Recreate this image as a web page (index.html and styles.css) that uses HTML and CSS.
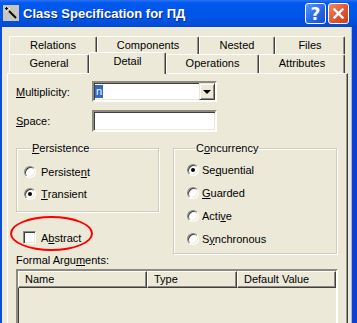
FILE: index.html
```html
<!DOCTYPE html>
<html>
    <head>
        <title>Class Specification for ПД</title>
        <link rel="stylesheet" href="styles.css">
    </head>
    <body>
        <div class="window">
            <div class="titlebar">
                <span class="app-icon">
                    <svg width="16" height="16" viewBox="0 0 16 16">
                        <rect width="16" height="16" fill="#c9c6bb"/>
                        <line x1="6" y1="6" x2="13" y2="13" stroke="#000" stroke-width="2"/>
                        <rect x="3" y="2" width="1" height="3" fill="#000"/>
                        <rect x="2" y="3" width="3" height="1" fill="#000"/>
                        <rect x="6" y="3" width="1" height="1" fill="#fff"/>
                        <rect x="3" y="6" width="1" height="1" fill="#fff"/>
                    </svg>
                </span>
                <span class="title">Class Specification for ПД</span>
                <span class="cap-btn help">?</span>
                <span class="cap-btn close">
                    <svg width="11" height="11" viewBox="0 0 11 11">
                        <path d="M1.5 1.5 L9.5 9.5 M9.5 1.5 L1.5 9.5" stroke="#fff" stroke-width="2.4" stroke-linecap="square"/>
                    </svg>
                </span>
            </div>
            <div class="client">
                <div class="tabs">
                    <div class="tab-row">
                        <div class="tab" style="width:88px">Relations</div>
                        <div class="tab" style="width:102px">Components</div>
                        <div class="tab" style="width:76px">Nested</div>
                        <div class="tab" style="width:70px">Files</div>
                    </div>
                    <div class="tab-row front">
                        <div class="tab" style="width:80px">General</div>
                        <div class="tab active" style="width:77px">Detail</div>
                        <div class="tab" style="width:93px">Operations</div>
                        <div class="tab" style="width:86px">Attributes</div>
                    </div>
                </div>
                <div class="panel">
                    <div class="field-row">
                        <span class="field-label"><u>M</u>ultiplicity:</span>
                        <div class="combo">
                            <span class="combo-text"><span class="sel">n</span></span>
                            <span class="combo-btn"><span class="arrow"></span></span>
                        </div>
                    </div>
                    <div class="field-row space-row">
                        <span class="field-label"><u>S</u>pace:</span>
                        <div class="edit"></div>
                    </div>
                    <div class="groups">
                        <div class="left-col">
                            <fieldset class="group persistence">
                                <legend><u>P</u>ersistence</legend>
                                <div class="opt"><span class="radio"></span>Persiste<u>n</u>t</div>
                                <div class="opt"><span class="radio on"></span><u>T</u>ransient</div>
                            </fieldset>
                            <div class="check-row">
                                <span class="check"></span>A<u>b</u>stract
                                <span class="mark"></span>
                            </div>
                        </div>
                        <fieldset class="group concurrency">
                            <legend>C<u>o</u>ncurrency</legend>
                            <div class="opt"><span class="radio on"></span>Se<u>q</u>uential</div>
                            <div class="opt"><span class="radio"></span><u>G</u>uarded</div>
                            <div class="opt"><span class="radio"></span>Acti<u>v</u>e</div>
                            <div class="opt"><span class="radio"></span>S<u>y</u>nchronous</div>
                        </fieldset>
                    </div>
                    <div class="list-label">Formal Argu<u>m</u>ents:</div>
                    <div class="list">
                        <div class="list-head">
                            <div class="col" style="width:129px">Name</div>
                            <div class="col" style="width:90px">Type</div>
                            <div class="col" style="width:99px">Default Value</div>
                        </div>
                    </div>
                </div>
            </div>
        </div>
    </body>
</html>
```

FILE: styles.css
```css
* {
    margin: 0;
    padding: 0;
    box-sizing: border-box;
}
body {
    font-family: "Liberation Sans", Arial, sans-serif;
    font-size: 11px;
    color: #000;
    background-color: #ece9d8;
}
.window {
    width: 357px;
    height: 323px;
    overflow: hidden;
    background-color: #ece9d8;
}
.titlebar {
    height: 27px;
    display: flex;
    align-items: center;
    padding: 0 8px 0 3px;
    background: linear-gradient(#2a72f0, #0058ee 3px, #0055e8 60%, #004ed8 90%, #0a44c4);
    color: #fff;
}
.app-icon {
    width: 16px;
    height: 16px;
    margin-top: -1px;
}
.app-icon svg {
    display: block;
}
.title {
    flex: 1;
    margin-left: 4px;
    font-weight: bold;
    font-size: 13px;
    text-shadow: 1px 1px 0 #0a2a8a;
    white-space: nowrap;
}
.cap-btn {
    width: 21px;
    height: 21px;
    margin-left: 2px;
    border: 1px solid #fff;
    border-radius: 3px;
    display: flex;
    align-items: center;
    justify-content: center;
    color: #fff;
}
.help {
    background: linear-gradient(135deg, #5a95f7, #2463e6 60%, #1a50d0);
    font-weight: bold;
    font-size: 17px;
    font-family: "DejaVu Sans", sans-serif;
}
.close {
    background: linear-gradient(135deg, #f08a6a, #e2562f 55%, #c7401e);
}
.close svg {
    display: block;
}
.client {
    height: 296px;
    border-left: 2px solid #0a4fdc;
    border-right: 5px solid #0b3fd6;
    box-shadow: inset -1px 0 #9db6e8;
    padding: 9px 4px 0 5px;
}
.tabs {
    margin-left: 2px;
}
.tab-row {
    display: flex;
    height: 18px;
}
.tab-row.front {
    height: 19px;
}
.tab {
    border: 1px solid;
    border-color: #fff #404040 transparent #fff;
    border-bottom: none;
    border-radius: 2px 2px 0 0;
    box-shadow: inset -1px 0 #9a978a;
    background-color: #ece9d8;
    text-align: center;
    line-height: 16px;
}
.front .tab {
    line-height: 17px;
}
.front .tab.active {
    position: relative;
    z-index: 1;
    height: 22px;
    margin-top: -2px;
    line-height: 16px;
}
.panel {
    height: 300px;
    border: 1px solid;
    border-color: #fff #404040 #404040 #fff;
    box-shadow: inset -1px 0 #9a978a;
    padding: 7px 8px 0 8px;
}
.field-row {
    display: flex;
    align-items: center;
}
.field-label {
    width: 76px;
}
.space-row {
    margin-top: 8px;
}
.combo {
    width: 125px;
    height: 21px;
    display: flex;
    background-color: #fff;
    border: 2px solid;
    border-color: #8e8b7e #fff #fff #8e8b7e;
    box-shadow: inset 1px 1px #404040, inset -1px -1px #ece9d8;
}
.combo-text {
    flex: 1;
    padding: 2px 0 0 1px;
}
.sel {
    display: inline-block;
    width: 8px;
    height: 13px;
    line-height: 13px;
    background-color: #316ac5;
    color: #fff;
    text-align: center;
}
.combo-btn {
    width: 16px;
    height: 17px;
    background-color: #ece9d8;
    border: 1px solid;
    border-color: #ece9d8 #404040 #404040 #ece9d8;
    box-shadow: inset 1px 1px #fff, inset -1px -1px #8e8b7e;
    display: flex;
    align-items: center;
    justify-content: center;
}
.arrow {
    width: 0;
    height: 0;
    border-left: 4px solid transparent;
    border-right: 4px solid transparent;
    border-top: 4px solid #000;
}
.edit {
    width: 125px;
    height: 22px;
    background-color: #fff;
    border: 2px solid;
    border-color: #8e8b7e #fff #fff #8e8b7e;
    box-shadow: inset 1px 1px #404040, inset -1px -1px #ece9d8;
}
.groups {
    display: grid;
    grid-template-columns: 143px 164px;
    column-gap: 14px;
    align-items: start;
    margin-top: 10px;
}
.group {
    border: 1px solid #d0cdbc;
    box-shadow: 1px 1px 0 #fff, inset 1px 1px 0 #fff;
    padding: 0;
}
.group legend {
    line-height: 13px;
    padding: 0 1px;
    margin-left: 7px;
}
.concurrency legend {
    margin-left: 8px;
}
.persistence {
    padding: 6px 0 6px 7px;
}
.concurrency {
    padding: 3px 0 3px 13px;
}
.opt {
    display: flex;
    align-items: center;
    height: 22px;
}
.concurrency .opt {
    height: 23px;
}
.radio {
    position: relative;
    width: 12px;
    height: 12px;
    margin-right: 5px;
    border-radius: 50%;
    background-color: #fff;
    border: 1px solid;
    border-color: #8e8b7e #fff #fff #8e8b7e;
    box-shadow: inset 1px 1px #404040, inset -1px -1px #ece9d8;
}
.concurrency .radio {
    margin-right: 3px;
}
.radio.on::after {
    content: "";
    position: absolute;
    left: 3px;
    top: 3px;
    width: 4px;
    height: 4px;
    border-radius: 50%;
    background-color: #000;
}
.check-row {
    position: relative;
    display: flex;
    align-items: center;
    height: 13px;
    margin-top: 19px;
    padding-left: 7px;
}
.check {
    width: 13px;
    height: 13px;
    margin-right: 5px;
    background-color: #fff;
    border: 1px solid;
    border-color: #8e8b7e #fff #fff #8e8b7e;
    box-shadow: inset 1px 1px #404040, inset -1px -1px #ece9d8;
}
.mark {
    position: absolute;
    left: -6px;
    top: -15px;
    width: 83px;
    height: 35px;
    border: 2px solid #f00;
    border-radius: 50%;
}
.list-label {
    line-height: 13px;
}
.list {
    width: 322px;
    height: 60px;
    margin-top: 2px;
    border: 2px solid;
    border-color: #8e8b7e #fff #fff #8e8b7e;
    box-shadow: inset 1px 1px #404040;
}
.list-head {
    display: flex;
}
.col {
    height: 17px;
    line-height: 15px;
    padding-left: 6px;
    border: 1px solid;
    border-color: #fff #404040 #404040 #fff;
    box-shadow: inset -1px -1px #8e8b7e;
    white-space: nowrap;
}
```
